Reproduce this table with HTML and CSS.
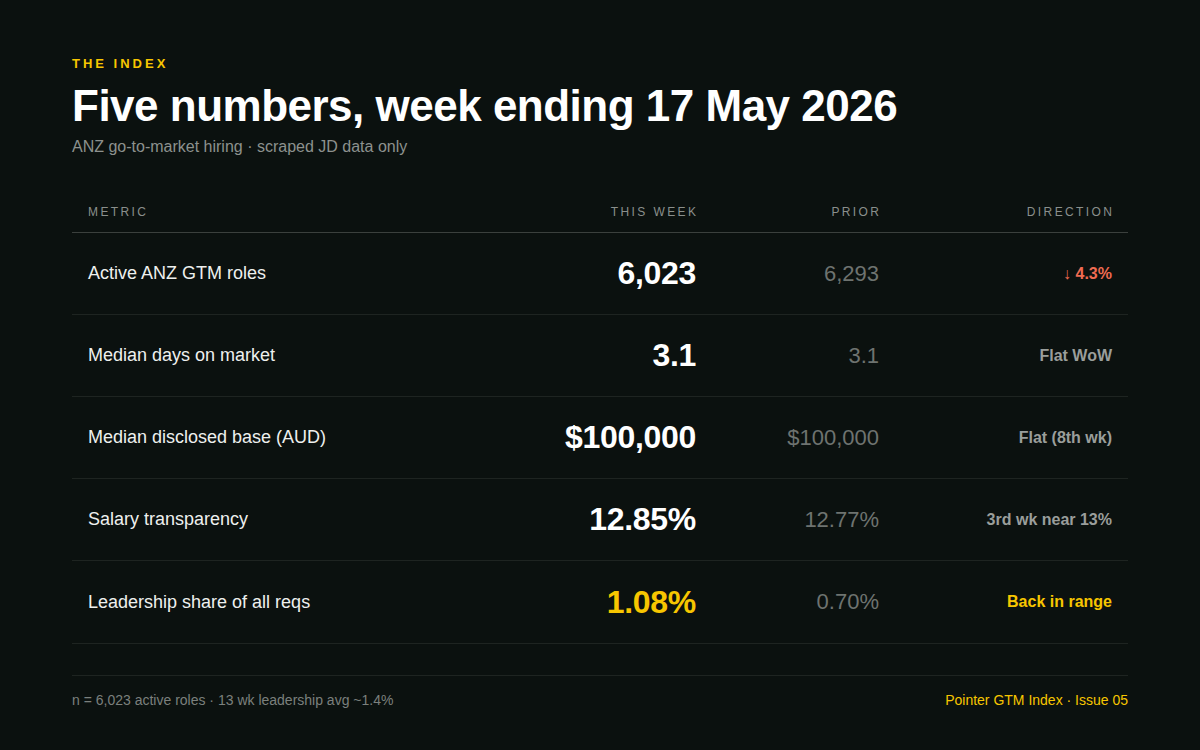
FILE: index.html
```html
<!DOCTYPE html>
<html lang="en">
<head>
<meta charset="utf-8">
<title>The Index</title>
<link rel="stylesheet" href="styles.css">
</head>
<body>
<main class="page">
  <header class="intro">
    <div class="eyebrow">THE INDEX</div>
    <h1 class="title">Five numbers, week ending 17 May 2026</h1>
    <p class="subtitle">ANZ go-to-market hiring · scraped JD data only</p>
  </header>

  <section class="table">
    <div class="row head">
      <div class="cell metric">Metric</div>
      <div class="cell num">This week</div>
      <div class="cell num">Prior</div>
      <div class="cell num dir-h">Direction</div>
    </div>
    <div class="row">
      <div class="cell metric">Active ANZ GTM roles</div>
      <div class="cell num value">6,023</div>
      <div class="cell num prior">6,293</div>
      <div class="cell num dir down">↓ 4.3%</div>
    </div>
    <div class="row">
      <div class="cell metric">Median days on market</div>
      <div class="cell num value">3.1</div>
      <div class="cell num prior">3.1</div>
      <div class="cell num dir">Flat WoW</div>
    </div>
    <div class="row">
      <div class="cell metric">Median disclosed base (AUD)</div>
      <div class="cell num value">$100,000</div>
      <div class="cell num prior">$100,000</div>
      <div class="cell num dir">Flat (8th wk)</div>
    </div>
    <div class="row">
      <div class="cell metric">Salary transparency</div>
      <div class="cell num value">12.85%</div>
      <div class="cell num prior">12.77%</div>
      <div class="cell num dir">3rd wk near 13%</div>
    </div>
    <div class="row">
      <div class="cell metric">Leadership share of all reqs</div>
      <div class="cell num value accent">1.08%</div>
      <div class="cell num prior">0.70%</div>
      <div class="cell num dir accent">Back in range</div>
    </div>
  </section>

  <footer class="foot">
    <span class="note">n = 6,023 active roles · 13 wk leadership avg ~1.4%</span>
    <span class="brand">Pointer GTM Index · Issue 05</span>
  </footer>
</main>
</body>
</html>
```

FILE: styles.css
```css
* { box-sizing: border-box; }

html, body {
  margin: 0;
  padding: 0;
  background: #0b110f;
}

body {
  font-family: "Liberation Sans", Arial, Helvetica, sans-serif;
  color: #eef0ee;
  width: 1200px;
  height: 750px;
  overflow: hidden;
}

.page {
  padding: 56px 72px 0 72px;
}

.eyebrow {
  font-size: 13px;
  line-height: 16px;
  font-weight: 700;
  letter-spacing: 3px;
  color: #f7c600;
}

.title {
  margin: 10px 0 0 0;
  font-size: 44px;
  line-height: 48px;
  font-weight: 700;
  letter-spacing: -0.5px;
  color: #ffffff;
}

.subtitle {
  margin: 7px 0 0 0;
  font-size: 16px;
  line-height: 20px;
  color: #8d918e;
}

.table {
  margin-top: 31px;
  border-bottom: 1px solid #1e2421;
}

.row {
  display: grid;
  grid-template-columns: 1fr 200px 183px 233px;
  align-items: center;
  height: 82px;
  border-bottom: 1px solid #1e2421;
}

.row:last-child {
  border-bottom: none;
}

.row.head {
  height: 45px;
  border-bottom: 1px solid #3b403d;
}

.cell {
  padding: 0 16px;
}

.num {
  text-align: right;
}

.head .cell {
  font-size: 12px;
  line-height: 16px;
  letter-spacing: 2.4px;
  text-transform: uppercase;
  color: #8a8f8c;
  margin-right: -2.4px;
  padding-top: 3px;
}

.metric {
  font-size: 18px;
  color: #eef0ee;
}

.value {
  font-size: 32px;
  font-weight: 700;
  letter-spacing: -0.3px;
  color: #ffffff;
}

.prior {
  font-size: 22px;
  color: #6e7370;
}

.dir {
  font-size: 16px;
  font-weight: 700;
  color: #9a9e9b;
}

.down {
  color: #ef6b52;
}

.accent {
  color: #f7c600;
}

.dir.accent {
  color: #f7c600;
}

.foot {
  margin-top: 31px;
  border-top: 1px solid #1e2421;
  padding-top: 15px;
  display: flex;
  justify-content: space-between;
  font-size: 14px;
  line-height: 18px;
}

.note {
  color: #7b807d;
}

.brand {
  color: #f7c600;
}
```
